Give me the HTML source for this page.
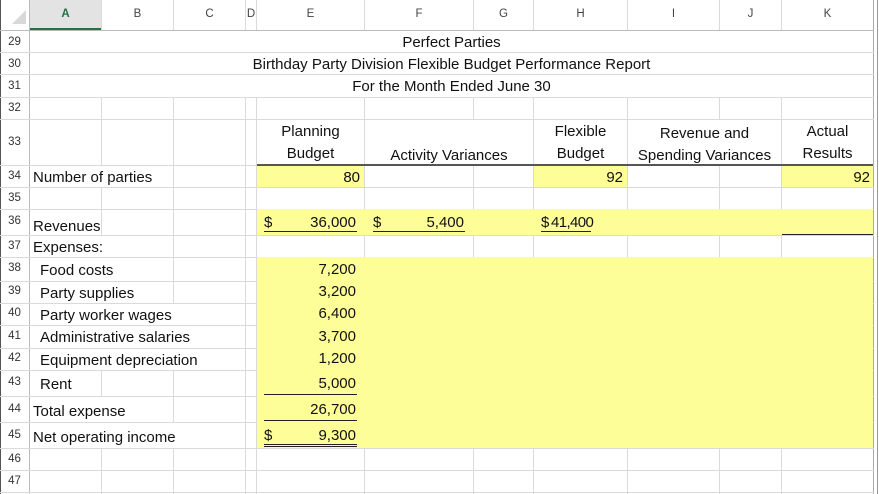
<!DOCTYPE html><html><head><style>
body{margin:0;width:879px;height:494px;overflow:hidden;background:#fff;position:relative;font-family:"Liberation Sans",sans-serif;}
div{position:absolute;box-sizing:border-box}
.v{width:1px;background:#dadada}
.h{height:1px;background:#dadada}
.t{font-size:15px;color:#111;white-space:nowrap;line-height:17px}
.r{font-size:11.5px;color:#333;left:0;width:29px;text-align:center}
.c{font-size:11.5px;color:#444;top:8px;text-align:center}
.y{background:#fefe99}
.w{background:#fff}
.u{height:1px;background:#222}
</style></head><body>
<div class="v" style="left:29px;top:0;height:494px;background:#bbb"></div>
<div class="v" style="left:101px;top:0;height:494px"></div>
<div class="v" style="left:173px;top:0;height:494px"></div>
<div class="v" style="left:245px;top:0;height:494px"></div>
<div class="v" style="left:256px;top:0;height:494px"></div>
<div class="v" style="left:364px;top:0;height:494px"></div>
<div class="v" style="left:473px;top:0;height:494px"></div>
<div class="v" style="left:533px;top:0;height:494px"></div>
<div class="v" style="left:627px;top:0;height:494px"></div>
<div class="v" style="left:719px;top:0;height:494px"></div>
<div class="v" style="left:781px;top:0;height:494px"></div>
<div class="v" style="left:873px;top:0;height:494px;background:#aaa"></div>
<div class="v" style="left:877px;top:0;height:494px;background:#999"></div>
<div class="v" style="left:0;top:0;height:494px;background:#555"></div>
<div class="h" style="left:0;top:30px;width:874px;background:#bbb"></div>
<div class="h" style="left:0;top:52px;width:874px"></div>
<div class="h" style="left:0;top:74px;width:874px"></div>
<div class="h" style="left:0;top:97px;width:874px"></div>
<div class="h" style="left:0;top:119px;width:874px"></div>
<div class="h" style="left:0;top:165px;width:874px"></div>
<div class="h" style="left:0;top:187px;width:874px"></div>
<div class="h" style="left:0;top:209px;width:874px"></div>
<div class="h" style="left:0;top:235px;width:874px"></div>
<div class="h" style="left:0;top:257px;width:874px"></div>
<div class="h" style="left:0;top:281px;width:874px"></div>
<div class="h" style="left:0;top:303px;width:874px"></div>
<div class="h" style="left:0;top:325px;width:874px"></div>
<div class="h" style="left:0;top:348px;width:874px"></div>
<div class="h" style="left:0;top:370px;width:874px"></div>
<div class="h" style="left:0;top:396px;width:874px"></div>
<div class="h" style="left:0;top:422px;width:874px"></div>
<div class="h" style="left:0;top:448px;width:874px"></div>
<div class="h" style="left:0;top:470px;width:874px"></div>
<div class="h" style="left:0;top:492px;width:874px"></div>
<div class="w" style="left:30px;top:31px;width:843px;height:21px"></div>
<div class="w" style="left:30px;top:53px;width:843px;height:21px"></div>
<div class="w" style="left:30px;top:75px;width:843px;height:22px"></div>
<div class="w" style="left:365px;top:120px;width:168px;height:45px"></div>
<div class="w" style="left:628px;top:120px;width:153px;height:45px"></div>
<div class="w" style="left:1px;top:0;width:28px;height:30px"></div>
<div style="left:12px;top:10px;width:0;height:0;border-left:14px solid transparent;border-bottom:14px solid #d8d8d8"></div>
<div style="left:30px;top:0;width:71px;height:30px;background:#e3e3e3"></div>
<div style="left:30px;top:28px;width:71px;height:2px;background:#217346"></div>
<div class="c" style="left:30px;width:71px;color:#217346;font-weight:bold">A</div>
<div class="c" style="left:102px;width:71px">B</div>
<div class="c" style="left:174px;width:71px">C</div>
<div class="c" style="left:246px;width:10px">D</div>
<div class="c" style="left:257px;width:107px">E</div>
<div class="c" style="left:365px;width:108px">F</div>
<div class="c" style="left:474px;width:59px">G</div>
<div class="c" style="left:534px;width:93px">H</div>
<div class="c" style="left:628px;width:91px">I</div>
<div class="c" style="left:720px;width:61px">J</div>
<div class="c" style="left:782px;width:91px">K</div>
<div class="y" style="left:257px;top:166px;width:107px;height:21px"></div>
<div class="y" style="left:534px;top:166px;width:93px;height:21px"></div>
<div class="y" style="left:782px;top:166px;width:91px;height:21px"></div>
<div class="y" style="left:257px;top:209px;width:616px;height:26px"></div>
<div class="y" style="left:257px;top:257px;width:616px;height:191px"></div>
<div class="w" style="left:100px;top:166px;width:60px;height:21px"></div>
<div class="w" style="left:100px;top:236px;width:10px;height:21px"></div>
<div class="w" style="left:100px;top:282px;width:60px;height:21px"></div>
<div class="w" style="left:100px;top:304px;width:80px;height:21px"></div>
<div class="w" style="left:100px;top:326px;width:110px;height:22px"></div>
<div class="w" style="left:100px;top:349px;width:110px;height:21px"></div>
<div class="w" style="left:100px;top:258px;width:20px;height:23px"></div>
<div class="w" style="left:100px;top:423px;width:90px;height:25px"></div>
<div class="w" style="left:100px;top:397px;width:30px;height:25px"></div>
<div style="left:257px;top:164px;width:616px;height:2px;background:#555"></div>
<div class="u" style="left:782px;top:234px;width:91px"></div>
<div class="r" style="top:36px">29</div>
<div class="r" style="top:58px">30</div>
<div class="r" style="top:80px">31</div>
<div class="r" style="top:102px">32</div>
<div class="r" style="top:136px">33</div>
<div class="r" style="top:170px">34</div>
<div class="r" style="top:192px">35</div>
<div class="r" style="top:215px">36</div>
<div class="r" style="top:240px">37</div>
<div class="r" style="top:262px">38</div>
<div class="r" style="top:285px">39</div>
<div class="r" style="top:307px">40</div>
<div class="r" style="top:330px">41</div>
<div class="r" style="top:352px">42</div>
<div class="r" style="top:376px">43</div>
<div class="r" style="top:403px">44</div>
<div class="r" style="top:429px">45</div>
<div class="r" style="top:453px">46</div>
<div class="r" style="top:475px">47</div>
<div class="t" style="left:30px;width:843px;text-align:center;top:34px">Perfect Parties</div>
<div class="t" style="left:30px;width:843px;text-align:center;top:56px">Birthday Party Division Flexible Budget Performance Report</div>
<div class="t" style="left:30px;width:843px;text-align:center;top:78px">For the Month Ended June 30</div>
<div class="t" style="left:257px;width:107px;text-align:center;top:123px">Planning</div>
<div class="t" style="left:257px;width:107px;text-align:center;top:145px">Budget</div>
<div class="t" style="left:365px;width:168px;text-align:center;top:147px">Activity Variances</div>
<div class="t" style="left:534px;width:93px;text-align:center;top:123px">Flexible</div>
<div class="t" style="left:534px;width:93px;text-align:center;top:145px">Budget</div>
<div class="t" style="left:628px;width:153px;text-align:center;top:125px">Revenue and</div>
<div class="t" style="left:628px;width:153px;text-align:center;top:147px">Spending Variances</div>
<div class="t" style="left:782px;width:91px;text-align:center;top:123px">Actual</div>
<div class="t" style="left:782px;width:91px;text-align:center;top:145px">Results</div>
<div class="t" style="left:33px;top:169px">Number of parties</div>
<div class="t" style="left:33px;top:218px">Revenues</div>
<div class="t" style="left:33px;top:239px">Expenses:</div>
<div class="t" style="left:40px;top:262px">Food costs</div>
<div class="t" style="left:40px;top:285px">Party supplies</div>
<div class="t" style="left:40px;top:307px">Party worker wages</div>
<div class="t" style="left:40px;top:329px">Administrative salaries</div>
<div class="t" style="left:40px;top:352px">Equipment depreciation</div>
<div class="t" style="left:40px;top:376px">Rent</div>
<div class="t" style="left:33px;top:403px">Total expense</div>
<div class="t" style="left:33px;top:429px">Net operating income</div>
<div class="t" style="left:257px;width:103px;text-align:right;top:169px">80</div>
<div class="t" style="left:534px;width:89px;text-align:right;top:169px">92</div>
<div class="t" style="left:782px;width:88px;text-align:right;top:169px">92</div>
<div class="t" style="left:264px;top:214px">$</div>
<div class="t" style="left:264px;width:92px;text-align:right;top:214px">36,000</div>
<div class="u" style="left:264px;top:231px;width:93px"></div>
<div class="t" style="left:373px;top:214px">$</div>
<div class="t" style="left:373px;width:91px;text-align:right;top:214px">5,400</div>
<div class="u" style="left:373px;top:231px;width:92px"></div>
<div class="t" style="left:541px;top:214px">$</div>
<div class="t" style="left:551px;width:40px;text-align:right;top:214px;letter-spacing:-0.6px">41,400</div>
<div class="u" style="left:541px;top:231px;width:50px"></div>
<div class="t" style="left:264px;width:92px;text-align:right;top:261px">7,200</div>
<div class="t" style="left:264px;width:92px;text-align:right;top:283px">3,200</div>
<div class="t" style="left:264px;width:92px;text-align:right;top:305px">6,400</div>
<div class="t" style="left:264px;width:92px;text-align:right;top:328px">3,700</div>
<div class="t" style="left:264px;width:92px;text-align:right;top:350px">1,200</div>
<div class="t" style="left:264px;width:92px;text-align:right;top:375px">5,000</div>
<div class="u" style="left:264px;top:394px;width:93px"></div>
<div class="t" style="left:264px;width:92px;text-align:right;top:401px">26,700</div>
<div class="u" style="left:264px;top:420px;width:93px"></div>
<div class="t" style="left:264px;top:427px">$</div>
<div class="t" style="left:264px;width:92px;text-align:right;top:427px">9,300</div>
<div class="u" style="left:264px;top:444px;width:93px"></div>
<div class="u" style="left:264px;top:446px;width:93px"></div>
</body></html>
